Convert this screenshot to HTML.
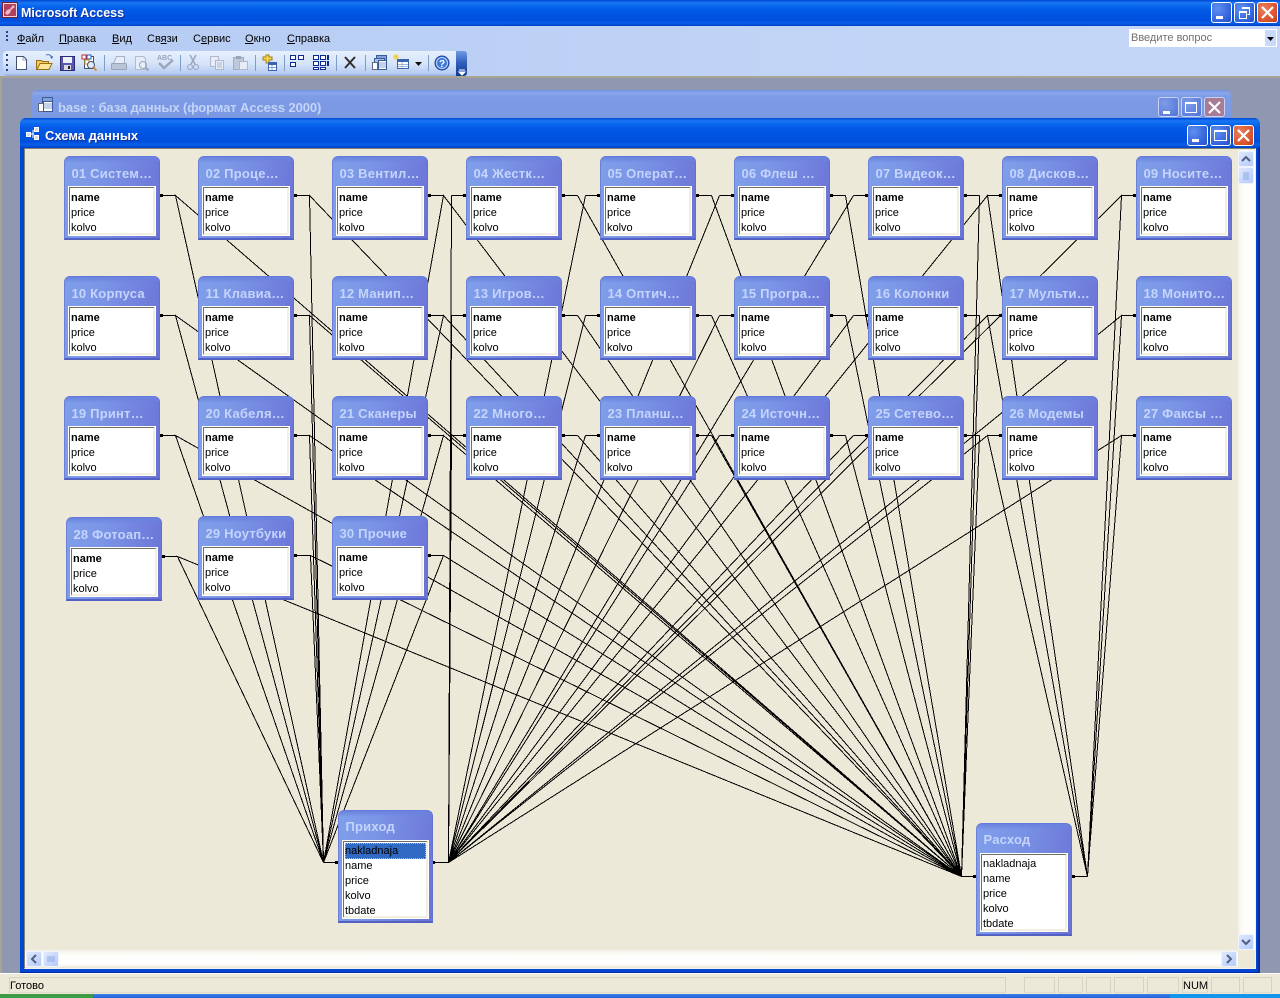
<!DOCTYPE html>
<html lang="ru"><head><meta charset="utf-8"><title>Microsoft Access</title>
<style>
html,body{margin:0;padding:0}
body{width:1280px;height:998px;position:relative;overflow:hidden;background:#8f98b0;font-family:"Liberation Sans",Arial,sans-serif;font-size:11px;color:#000}
div,svg,span{box-sizing:border-box}
.a{position:absolute}
.xp{background:linear-gradient(#0049d4 0,#1a78f4 3px,#0c6cf0 5px,#035ce6 9px,#0053e2 60%,#0050dc 80%,#075fec 88%,#0042c4 100%)}
.btn{position:absolute;width:21px;height:21px;border:1px solid #fff;border-radius:3px;background:radial-gradient(circle at 30% 30%,#5f8ff0,#2f5fd8 75%,#2450c0)}
.btn.c{background:radial-gradient(circle at 30% 30%,#e8805c,#d9512a 70%,#c23a18)}
.btn.i{border-color:#c8d3f2;background:radial-gradient(circle at 30% 30%,#7f9ae8,#5b7fdc 75%,#5272d4)}
.btn.ic{border-color:#c8d3f2;background:#a87c94}
.btn svg{position:absolute;left:0;top:0;width:19px;height:19px}
.menu span{position:absolute;top:33px;line-height:13px;font-size:11px}
.menu u{text-decoration:underline}
.sb{position:absolute;width:16px;height:16px;border:1px solid #eef3fd;border-radius:2px;background:linear-gradient(135deg,#dfe9fd,#b6cafa)}
.sb svg{position:absolute;left:0;top:0;width:14px;height:14px}
.st{position:absolute;top:977px;height:16px;border:1px solid #d6d3c2;border-bottom-color:#dedbcb}
.t{position:absolute;width:96px;height:84px;border-radius:6px 6px 0 0;background:linear-gradient(100deg,#7f9fea 0,#7b95e6 35%,#6b72d6 100%);border-top:1px solid #6379dc;border-left:1px solid #6d80d8;border-right:1px solid #6470d0;border-bottom:2px solid #5361c2;z-index:3}
.t:before{content:"";position:absolute;left:0;right:0;top:0;height:6px;border-radius:5px 5px 0 0;background:linear-gradient(#6a82de,rgba(106,130,222,0))}
.t b{position:absolute;left:6.5px;top:9px;font-size:13px;line-height:15px;color:#c4d4fb;white-space:nowrap;letter-spacing:.2px;font-weight:bold}
.box{position:absolute;left:3px;right:3px;top:29px;bottom:2px;background:#fff;border:1px solid #fff}
.in{position:absolute;left:0;right:0;top:0;bottom:0;border-top:1px solid #716f64;border-left:1px solid #716f64;border-right:2px solid #f1efe2;border-bottom:2px solid #f1efe2}
.r{position:absolute;left:1px;height:15px;line-height:15px;font-size:11px;white-space:nowrap}
.r1{top:3px;font-weight:bold}.r2{top:18px}.r3{top:33px}
.p2{top:17px}.p3{top:32px}.p4{top:47px}.p5{top:62px}
.sep{stroke:#7f9dc9;stroke-width:1}
</style></head>
<body>
<!-- App title bar -->
<div class="a xp" style="left:0;top:0;width:1280px;height:26px"></div>
<svg class="a" style="left:2px;top:2px" width="16" height="16" viewBox="0 0 16 16"><rect x=".5" y=".5" width="15" height="15" fill="#f0d8e0" stroke="#7d1a30"/><rect x="2" y="2" width="12" height="12" fill="#b04060"/><path d="M11 3l2 2-4 3-1 3-3 2-2-2 2-3 3-1z" fill="#f0b8c8"/></svg>
<div class="a" style="left:21px;top:6px;color:#fff;font-weight:bold;font-size:12.5px;line-height:15px;white-space:nowrap;text-shadow:1px 1px 0 #0f2f9c">Microsoft Access</div>
<div class="btn" style="left:1211px;top:2px"><svg viewBox="0 0 19 19"><rect x="4" y="13" width="7" height="3" fill="#fff"/></svg></div>
<div class="btn" style="left:1234px;top:2px"><svg viewBox="0 0 19 19"><path d="M7.5 4.5h7v7h-2M4.500 8.500h7v7h-7z" fill="none" stroke="#fff"/><path d="M7 4h8v2H7zM4 8h8v2H4z" fill="#fff"/></svg></div>
<div class="btn c" style="left:1257px;top:2px"><svg viewBox="0 0 19 19"><path d="M4 4l11 11M15 4L4 15" stroke="#fff" stroke-width="2.200"/></svg></div>
<!-- Menu band -->
<div class="a" style="left:0;top:26px;width:1280px;height:50px;background:linear-gradient(90deg,#b5cbf3 0,#c2d5f7 70%,#c4d6f8 100%)"></div>
<svg class="a" style="left:5px;top:30px" width="4" height="14"><path d="M1 1h2v2H1zM1 5h2v2H1zM1 9h2v2H1z" fill="#27418a"/></svg>
<div class="menu">
<span style="left:17px"><u>Ф</u>айл</span><span style="left:59px"><u>П</u>равка</span><span style="left:112px"><u>В</u>ид</span><span style="left:147px">Св<u>я</u>зи</span><span style="left:193px">С<u>е</u>рвис</span><span style="left:245px"><u>О</u>кно</span><span style="left:287px"><u>С</u>правка</span>
</div>
<div class="a" style="left:1129px;top:29px;width:148px;height:18px;background:#fff"></div>
<div class="a" style="left:1131px;top:32px;color:#6f6f6f;font-size:11px;line-height:13px">Введите вопрос</div>
<div class="a" style="left:1265px;top:30px;width:11px;height:16px;background:#c8d9fa"></div>
<svg class="a" style="left:1267px;top:37px" width="8" height="4"><path d="M0 0h7L3.500 4z" fill="#000"/></svg>
<!-- Toolbar -->
<div class="a" style="left:3px;top:51px;width:456px;height:25px;border-radius:4px;background:linear-gradient(#e6f0fd,#d6e4fa 50%,#b6cbf2 90%,#8ea9da)"></div>
<div class="a" style="left:456px;top:51px;width:11px;height:25px;border-radius:0 3px 3px 0;background:linear-gradient(#6f9be4,#2f5cb8 50%,#0f3a96)"></div>
<svg class="a" style="left:0;top:48px;z-index:2" width="480" height="30" viewBox="0 48 480 30">
<path d="M6 54h2v2H6zM6 59h2v2H6zM6 64h2v2H6zM6 69h2v2H6z" fill="#27418a"/>
<path d="M459 70h6M459 72h6l-3 3z" stroke="#fff" fill="#fff"/>
<!-- new -->
<path d="M16.500 56.500h7l3 3v10h-10z" fill="#fff" stroke="#46526e"/><path d="M23 57v3h3" fill="none" stroke="#9aa6c0"/>
<!-- open -->
<path d="M36.500 69.500v-9h5l1 1h6v8z" fill="#f3c860" stroke="#9a6f14"/><path d="M37 69.500l3-6h12l-3 6z" fill="#fbe59a" stroke="#9a6f14"/><path d="M46 55c3-1 5 0 6 3" fill="none" stroke="#5277b8"/><path d="M50 57l2 2 1-3z" fill="#3c62a8"/>
<!-- save -->
<rect x="60.500" y="56.500" width="14" height="14" fill="#5a56b0" stroke="#2b2a72"/><rect x="63" y="57" width="9" height="6" fill="#eef0fb"/><rect x="64" y="65" width="7" height="5" fill="#d9dbe8"/><rect x="68" y="66" width="2" height="3" fill="#222"/>
<!-- relationships report -->
<path d="M84.500 56.500h9v12h-9z" fill="#fff" stroke="#46526e"/><rect x="82" y="55" width="4" height="4" fill="#fff" stroke="#d02a1a"/><rect x="87" y="55" width="4" height="4" fill="#fff" stroke="#2458c8"/><rect x="85" y="60" width="4" height="4" fill="#fff" stroke="#c8a018"/><circle cx="91" cy="65" r="3.500" fill="#dfe9fb" stroke="#46526e"/><path d="M93.500 67.500l3 3" stroke="#d89030" stroke-width="2"/>
<line class="sep" x1="104.500" y1="55" x2="104.500" y2="71" />
<!-- print (disabled) -->
<path d="M113.500 63.500l3-7h8v7" fill="#e7edf8" stroke="#a9b4c8"/><rect x="111.500" y="63.500" width="15" height="6" rx="1" fill="#b9c4d6" stroke="#99a4b8"/>
<!-- preview (disabled) -->
<path d="M135.500 56.500h8l2 2v11h-10z" fill="#e7edf8" stroke="#b1bbcc"/><circle cx="143" cy="65" r="3.500" fill="none" stroke="#98a4b8"/><path d="M145.500 67.500l3 3" stroke="#98a4b8" stroke-width="2"/>
<!-- spell (disabled) -->
<text x="157" y="60" font-family="Liberation Sans,sans-serif" font-size="7" font-weight="bold" fill="#9aa6ba">ABC</text><path d="M159 63l5 5 9-8" fill="none" stroke="#9aa6ba" stroke-width="2.500"/>
<line class="sep" x1="180.500" y1="55" x2="180.500" y2="71" />
<!-- cut -->
<path d="M190 55l5 9M196 55l-5 9" stroke="#9aa6ba" stroke-width="1.500" fill="none"/><circle cx="190" cy="67" r="2.500" fill="none" stroke="#98a4b8"/><circle cx="196" cy="67" r="2.500" fill="none" stroke="#98a4b8"/>
<!-- copy -->
<rect x="210.500" y="56.500" width="8" height="10" fill="#e7edf8" stroke="#aeb8ca"/><rect x="215.500" y="60.500" width="8" height="9" fill="#e7edf8" stroke="#aeb8ca"/><path d="M217 63h5M217 65h5M217 67h5" stroke="#aeb8ca"/>
<!-- paste -->
<rect x="233.500" y="57.500" width="10" height="12" fill="#bfc8d8" stroke="#a0aabd"/><rect x="236" y="56" width="5" height="3" fill="#98a4b8"/><rect x="239.500" y="61.500" width="8" height="8" fill="#e7edf8" stroke="#aeb8ca"/>
<line class="sep" x1="255.500" y1="55" x2="255.500" y2="71" />
<!-- add table -->
<path d="M263 57h3v-2h3v2h3v3h-3v3h-3v-3h-3z" fill="#f8d84a" stroke="#a08018"/><rect x="268.500" y="62.500" width="8" height="8" fill="#fff" stroke="#3a64b0"/><rect x="269" y="63" width="7" height="2" fill="#3a64b0"/><path d="M272 65v5M269 67.500h7" stroke="#8aa4d0"/>
<line class="sep" x1="284.500" y1="55" x2="284.500" y2="71" />
<!-- direct -->
<path d="M290.500 55.500h5v4h-5zM298.500 55.500h5v4h-5zM290.500 62.500h5v4h-5z" fill="#fff" stroke="#0a2a90"/>
<!-- all -->
<path d="M313.500 55.500h5v4h-5zM320.500 55.500h5v4h-5zM327.500 55.500h1v4h-1zM313.500 61.500h5v4h-5zM320.500 61.500h5v4h-5zM327.500 61.500h1v4h-1zM313.500 67.500h5v2h-5zM320.500 67.500h5v2h-5z" fill="#fff" stroke="#0a2a90"/>
<line class="sep" x1="336.500" y1="55" x2="336.500" y2="71" />
<!-- delete -->
<path d="M345 57l10 11M355 57l-10 11" stroke="#303030" stroke-width="2"/>
<line class="sep" x1="365.500" y1="55" x2="365.500" y2="71" />
<!-- db window -->
<rect x="376.500" y="55.500" width="10" height="9" fill="#7fa0d8" stroke="#3a5a98"/><rect x="374.500" y="58.500" width="10" height="9" fill="#a8c0e8" stroke="#3a5a98"/><rect x="372.500" y="62.500" width="5" height="7" fill="#fff" stroke="#606880"/><rect x="378.500" y="60.500" width="8" height="9" fill="#fff" stroke="#3a5a98"/><path d="M379 63h7M379 65h7M379 67h7" stroke="#8aa4d0"/>
<!-- new object -->
<path d="M396 54v6M393 57h6M394 55l4 4M398 55l-4 4" stroke="#f0d040"/><rect x="397.500" y="59.500" width="11" height="9" fill="#fff" stroke="#3a64b0"/><rect x="398" y="60" width="10" height="2" fill="#3a64b0"/><path d="M398 64.500h10M398 66.500h10M402 62v6" stroke="#a0b4d8"/>
<path d="M415 62h7l-3.500 4z" fill="#111"/>
<line class="sep" x1="428.500" y1="55" x2="428.500" y2="71" />
<!-- help -->
<circle cx="442" cy="63" r="7" fill="#3f7ad8" stroke="#1c3f98"/><circle cx="442" cy="63" r="5.500" fill="none" stroke="#bcd2f6"/><text x="442" y="67" text-anchor="middle" font-family="Liberation Sans,sans-serif" font-size="10" font-weight="bold" fill="#fff">?</text>
</svg>
<!-- MDI -->
<div class="a" style="left:0;top:76px;width:1280px;height:2px;background:#a8a490"></div>
<div class="a" style="left:0;top:76px;width:2px;height:897px;background:#a8a490"></div>
<!-- Base window -->
<div class="a" style="left:32px;top:90px;width:1199px;height:32px;border-radius:6px 6px 0 0;background:linear-gradient(#7090e0 0,#8aa6ec 3px,#7e9ce6 6px,#7a96e0 100%)"></div>
<svg class="a" style="left:38px;top:97px" width="16" height="16"><rect x="4.500" y=".5" width="10" height="9" fill="#7fa0d8" stroke="#3a5a98"/><rect x=".5" y="6.500" width="5" height="8" fill="#fff" stroke="#606880"/><rect x="5.500" y="4.500" width="9" height="10" fill="#fff" stroke="#3a5a98"/><path d="M6 7h8M6 9h8M6 11h8" stroke="#8aa4d0"/></svg>
<div class="a" style="left:58px;top:100px;color:#c4d4f8;font-weight:bold;font-size:13px;line-height:15px;letter-spacing:-.1px;white-space:nowrap">base : база данных (формат Access 2000)</div>
<div class="btn i" style="left:1158px;top:97px;height:20px"><svg viewBox="0 0 19 19"><rect x="4" y="13" width="7" height="3" fill="#fff"/></svg></div>
<div class="btn i" style="left:1181px;top:97px;height:20px"><svg viewBox="0 0 19 19"><rect x="3.500" y="4.500" width="11" height="10" fill="none" stroke="#fff"/><rect x="3" y="4" width="12" height="2" fill="#fff"/></svg></div>
<div class="btn ic" style="left:1204px;top:97px;height:20px"><svg viewBox="0 0 19 19"><path d="M4 4l11 11M15 4L4 15" stroke="#fff" stroke-width="2.200"/></svg></div>
<!-- Schema window -->
<div class="a" style="left:20px;top:118px;width:1240px;height:855px;background:#0046d5;border-radius:6px 6px 0 0;border-right:2px solid #0a2a9c;border-bottom:1px solid #0a2a9c"></div>
<div class="a xp" style="left:20px;top:118px;width:1240px;height:30px;border-radius:6px 6px 0 0"></div>
<svg class="a" style="left:26px;top:127px" width="16" height="14"><path d="M.5 5.500h4v4h-4zM8.500.5h4v4h-4zM8.500 8.500h4v4h-4z" fill="#cfe0fb" stroke="#fff"/><path d="M5 7h3M7 3v8" stroke="#fff"/></svg>
<div class="a" style="left:45px;top:128px;color:#fff;font-weight:bold;font-size:13px;line-height:15px;white-space:nowrap;text-shadow:1px 1px 0 #0f2f9c">Схема данных</div>
<div class="btn" style="left:1187px;top:125px"><svg viewBox="0 0 19 19"><rect x="4" y="13" width="7" height="3" fill="#fff"/></svg></div>
<div class="btn" style="left:1210px;top:125px"><svg viewBox="0 0 19 19"><rect x="3.500" y="4.500" width="12" height="10" fill="none" stroke="#fff"/><rect x="3" y="4" width="13" height="2" fill="#fff"/></svg></div>
<div class="btn c" style="left:1233px;top:125px"><svg viewBox="0 0 19 19"><path d="M4 4l11 11M15 4L4 15" stroke="#fff" stroke-width="2.200"/></svg></div>
<!-- Canvas -->
<div class="a" style="left:24px;top:148px;width:1232px;height:821px;background:#ece9d8;border-top:1px solid #808074;border-left:1px solid #808074;border-right:1px solid #f4f2e8;border-bottom:1px solid #f4f2e8"></div>
<div class="a" style="left:1238px;top:150px;width:17px;height:800px;background:linear-gradient(90deg,#f3f1e8,#fdfdfa 30%,#fff)"></div>
<div class="a" style="left:25px;top:950px;width:1213px;height:17px;background:linear-gradient(#f3f1e8,#fdfdfa 30%,#fff 80%,#f0eee2)"></div>
<div class="sb" style="left:1238px;top:151px"><svg viewBox="0 0 14 14"><path d="M3 9l4-4 4 4" fill="none" stroke="#4d6185" stroke-width="2"/></svg></div>
<div class="sb" style="left:1238px;top:167px;height:17px"><svg viewBox="0 0 14 14"><path d="M4 5h6M4 7h6M4 9h6M4 11h6" stroke="#8fa9e0"/></svg></div>
<div class="sb" style="left:1238px;top:934px"><svg viewBox="0 0 14 14"><path d="M3 5l4 4 4-4" fill="none" stroke="#4d6185" stroke-width="2"/></svg></div>
<div class="sb" style="left:26px;top:951px"><svg viewBox="0 0 14 14"><path d="M9 3L5 7l4 4" fill="none" stroke="#4d6185" stroke-width="2"/></svg></div>
<div class="sb" style="left:43px;top:951px"><svg viewBox="0 0 14 14"><path d="M4 4v6M6 4v6M8 4v6M10 4v6" stroke="#8fa9e0"/></svg></div>
<div class="sb" style="left:1221px;top:951px"><svg viewBox="0 0 14 14"><path d="M5 3l4 4-4 4" fill="none" stroke="#4d6185" stroke-width="2"/></svg></div>
<!-- Relationship lines -->
<svg class="a" style="left:0;top:0;z-index:2" width="1280" height="998" viewBox="0 0 1280 998" shape-rendering="crispEdges">
<g transform="translate(.5 .5)" fill="none" stroke="#000" stroke-width="1">
<path d="M323 862L175 195L961 876M323 862L309 195L961 876M323 862L443 195L961 876M323 862L175 315L961 876M323 862L309 315L961 876M323 862L443 315L961 876M323 862L175 435L961 876M323 862L309 435L961 876M323 862L443 435L961 876M323 862L177 556L961 876M323 862L310 555L961 876M323 862L443 555L961 876"/>
<path d="M448 862L451 195M448 862L585 195M448 862L719 195M448 862L853 195M448 862L451 315M448 862L585 315M448 862L719 315M448 862L853 315M448 862L451 435M448 862L585 435M448 862L719 435M448 862L853 435"/>
<path d="M961 876L577 195M961 876L711 195M961 876L845 195M961 876L979 195M961 876L577 315M961 876L711 315M961 876L845 315M961 876L979 315M961 876L577 435M961 876L711 435M961 876L845 435M961 876L979 435"/>
<path d="M448 862L987 195L1087 876M448 862L1121 195L1087 876M448 862L987 315L1087 876M448 862L1121 315L1087 876M448 862L987 435L1087 876M448 862L1121 435L1087 876"/>
<path d="M160 195H175M294 195H309M428 195H443M451 195H466M562 195H577M585 195H600M696 195H711M719 195H734M830 195H845M853 195H868M964 195H979M987 195H1002M1121 195H1136M160 315H175M294 315H309M428 315H443M451 315H466M562 315H577M585 315H600M696 315H711M719 315H734M830 315H845M853 315H868M964 315H979M987 315H1002M1121 315H1136M160 435H175M294 435H309M428 435H443M451 435H466M562 435H577M585 435H600M696 435H711M719 435H734M830 435H845M853 435H868M964 435H979M987 435H1002M1121 435H1136M162 556H177M294 555H310M428 555H443M323 862H338M432 862H448M961 876H976M1071 876H1087"/>
</g>
<path fill="#000" d="M160 194h3v3h-3zM294 194h3v3h-3zM428 194h3v3h-3zM463 194h3v3h-3zM562 194h3v3h-3zM597 194h3v3h-3zM696 194h3v3h-3zM731 194h3v3h-3zM830 194h3v3h-3zM865 194h3v3h-3zM964 194h3v3h-3zM999 194h3v3h-3zM1133 194h3v3h-3zM160 314h3v3h-3zM294 314h3v3h-3zM428 314h3v3h-3zM463 314h3v3h-3zM562 314h3v3h-3zM597 314h3v3h-3zM696 314h3v3h-3zM731 314h3v3h-3zM830 314h3v3h-3zM865 314h3v3h-3zM964 314h3v3h-3zM999 314h3v3h-3zM1133 314h3v3h-3zM160 434h3v3h-3zM294 434h3v3h-3zM428 434h3v3h-3zM463 434h3v3h-3zM562 434h3v3h-3zM597 434h3v3h-3zM696 434h3v3h-3zM731 434h3v3h-3zM830 434h3v3h-3zM865 434h3v3h-3zM964 434h3v3h-3zM999 434h3v3h-3zM1133 434h3v3h-3zM162 555h3v3h-3zM294 554h3v3h-3zM428 554h3v3h-3zM335 861h3v3h-3zM432 861h3v3h-3zM973 875h3v3h-3zM1072 875h3v3h-3z"/>
</svg>
<!-- Tables row 1 -->
<div class="t" style="left:64px;top:156px"><b>01 Систем…</b><div class="box"><div class="in"><div class="r r1">name</div><div class="r r2">price</div><div class="r r3">kolvo</div></div></div></div>
<div class="t" style="left:198px;top:156px"><b>02 Проце…</b><div class="box"><div class="in"><div class="r r1">name</div><div class="r r2">price</div><div class="r r3">kolvo</div></div></div></div>
<div class="t" style="left:332px;top:156px"><b>03 Вентил…</b><div class="box"><div class="in"><div class="r r1">name</div><div class="r r2">price</div><div class="r r3">kolvo</div></div></div></div>
<div class="t" style="left:466px;top:156px"><b>04 Жестк…</b><div class="box"><div class="in"><div class="r r1">name</div><div class="r r2">price</div><div class="r r3">kolvo</div></div></div></div>
<div class="t" style="left:600px;top:156px"><b>05 Операт…</b><div class="box"><div class="in"><div class="r r1">name</div><div class="r r2">price</div><div class="r r3">kolvo</div></div></div></div>
<div class="t" style="left:734px;top:156px"><b>06 Флеш …</b><div class="box"><div class="in"><div class="r r1">name</div><div class="r r2">price</div><div class="r r3">kolvo</div></div></div></div>
<div class="t" style="left:868px;top:156px"><b>07 Видеок…</b><div class="box"><div class="in"><div class="r r1">name</div><div class="r r2">price</div><div class="r r3">kolvo</div></div></div></div>
<div class="t" style="left:1002px;top:156px"><b>08 Дисков…</b><div class="box"><div class="in"><div class="r r1">name</div><div class="r r2">price</div><div class="r r3">kolvo</div></div></div></div>
<div class="t" style="left:1136px;top:156px"><b>09 Носите…</b><div class="box"><div class="in"><div class="r r1">name</div><div class="r r2">price</div><div class="r r3">kolvo</div></div></div></div>
<!-- Tables row 2 -->
<div class="t" style="left:64px;top:276px"><b>10 Корпуса</b><div class="box"><div class="in"><div class="r r1">name</div><div class="r r2">price</div><div class="r r3">kolvo</div></div></div></div>
<div class="t" style="left:198px;top:276px"><b>11 Клавиа…</b><div class="box"><div class="in"><div class="r r1">name</div><div class="r r2">price</div><div class="r r3">kolvo</div></div></div></div>
<div class="t" style="left:332px;top:276px"><b>12 Манип…</b><div class="box"><div class="in"><div class="r r1">name</div><div class="r r2">price</div><div class="r r3">kolvo</div></div></div></div>
<div class="t" style="left:466px;top:276px"><b>13 Игров…</b><div class="box"><div class="in"><div class="r r1">name</div><div class="r r2">price</div><div class="r r3">kolvo</div></div></div></div>
<div class="t" style="left:600px;top:276px"><b>14 Оптич…</b><div class="box"><div class="in"><div class="r r1">name</div><div class="r r2">price</div><div class="r r3">kolvo</div></div></div></div>
<div class="t" style="left:734px;top:276px"><b>15 Програ…</b><div class="box"><div class="in"><div class="r r1">name</div><div class="r r2">price</div><div class="r r3">kolvo</div></div></div></div>
<div class="t" style="left:868px;top:276px"><b>16 Колонки</b><div class="box"><div class="in"><div class="r r1">name</div><div class="r r2">price</div><div class="r r3">kolvo</div></div></div></div>
<div class="t" style="left:1002px;top:276px"><b>17 Мульти…</b><div class="box"><div class="in"><div class="r r1">name</div><div class="r r2">price</div><div class="r r3">kolvo</div></div></div></div>
<div class="t" style="left:1136px;top:276px"><b>18 Монито…</b><div class="box"><div class="in"><div class="r r1">name</div><div class="r r2">price</div><div class="r r3">kolvo</div></div></div></div>
<!-- Tables row 3 -->
<div class="t" style="left:64px;top:396px"><b>19 Принт…</b><div class="box"><div class="in"><div class="r r1">name</div><div class="r r2">price</div><div class="r r3">kolvo</div></div></div></div>
<div class="t" style="left:198px;top:396px"><b>20 Кабеля…</b><div class="box"><div class="in"><div class="r r1">name</div><div class="r r2">price</div><div class="r r3">kolvo</div></div></div></div>
<div class="t" style="left:332px;top:396px"><b>21 Сканеры</b><div class="box"><div class="in"><div class="r r1">name</div><div class="r r2">price</div><div class="r r3">kolvo</div></div></div></div>
<div class="t" style="left:466px;top:396px"><b>22 Много…</b><div class="box"><div class="in"><div class="r r1">name</div><div class="r r2">price</div><div class="r r3">kolvo</div></div></div></div>
<div class="t" style="left:600px;top:396px"><b>23 Планш…</b><div class="box"><div class="in"><div class="r r1">name</div><div class="r r2">price</div><div class="r r3">kolvo</div></div></div></div>
<div class="t" style="left:734px;top:396px"><b>24 Источн…</b><div class="box"><div class="in"><div class="r r1">name</div><div class="r r2">price</div><div class="r r3">kolvo</div></div></div></div>
<div class="t" style="left:868px;top:396px"><b>25 Сетево…</b><div class="box"><div class="in"><div class="r r1">name</div><div class="r r2">price</div><div class="r r3">kolvo</div></div></div></div>
<div class="t" style="left:1002px;top:396px"><b>26 Модемы</b><div class="box"><div class="in"><div class="r r1">name</div><div class="r r2">price</div><div class="r r3">kolvo</div></div></div></div>
<div class="t" style="left:1136px;top:396px"><b>27 Факсы …</b><div class="box"><div class="in"><div class="r r1">name</div><div class="r r2">price</div><div class="r r3">kolvo</div></div></div></div>
<!-- Tables row 4 -->
<div class="t" style="left:66px;top:517px"><b>28 Фотоап…</b><div class="box"><div class="in"><div class="r r1">name</div><div class="r r2">price</div><div class="r r3">kolvo</div></div></div></div>
<div class="t" style="left:198px;top:516px"><b>29 Ноутбуки</b><div class="box"><div class="in"><div class="r r1">name</div><div class="r r2">price</div><div class="r r3">kolvo</div></div></div></div>
<div class="t" style="left:332px;top:516px"><b>30 Прочие</b><div class="box"><div class="in"><div class="r r1">name</div><div class="r r2">price</div><div class="r r3">kolvo</div></div></div></div>
<!-- Приход -->
<div class="t" style="left:338px;top:810px;width:95px;height:113px"><b style="top:8px">Приход</b><div class="box"><div class="in">
<div class="a" style="left:1px;top:1px;right:0;height:16px;background:#316ac5;outline:1px dotted #e8b838;outline-offset:-1px"></div>
<div class="r" style="top:2px">nakladnaja</div><div class="r p2">name</div><div class="r p3">price</div><div class="r p4">kolvo</div><div class="r p5">tbdate</div></div></div></div>
<!-- Расход -->
<div class="t" style="left:976px;top:823px;width:96px;height:113px"><b style="top:8px">Расход</b><div class="box"><div class="in">
<div class="r" style="top:2px">nakladnaja</div><div class="r p2">name</div><div class="r p3">price</div><div class="r p4">kolvo</div><div class="r p5">tbdate</div></div></div></div>
<!-- Status bar -->
<div class="a" style="left:0;top:973px;width:1280px;height:21px;background:#ece9d8;border-top:1px solid #fff"></div>
<div class="st" style="left:9px;width:997px"></div>
<div class="a" style="left:10px;top:979px;font-size:11px;line-height:14px">Готово</div>
<div class="st" style="left:1024px;width:31px"></div><div class="st" style="left:1058px;width:25px"></div><div class="st" style="left:1086px;width:25px"></div><div class="st" style="left:1114px;width:30px"></div><div class="st" style="left:1147px;width:32px"></div><div class="st" style="left:1182px;width:26px"></div><div class="st" style="left:1211px;width:29px"></div><div class="st" style="left:1243px;width:29px"></div>
<div class="a" style="left:1183px;top:979px;font-size:11px;line-height:14px">NUM</div>
<!-- Taskbar -->
<div class="a" style="left:0;top:994px;width:1280px;height:4px;background:linear-gradient(#3a7fe8,#2460d8)"></div>
<div class="a" style="left:0;top:994px;width:93px;height:4px;background:#3f9a45"></div>
<div class="a" style="left:1170px;top:994px;width:110px;height:4px;background:#1196ea"></div>
</body></html>
